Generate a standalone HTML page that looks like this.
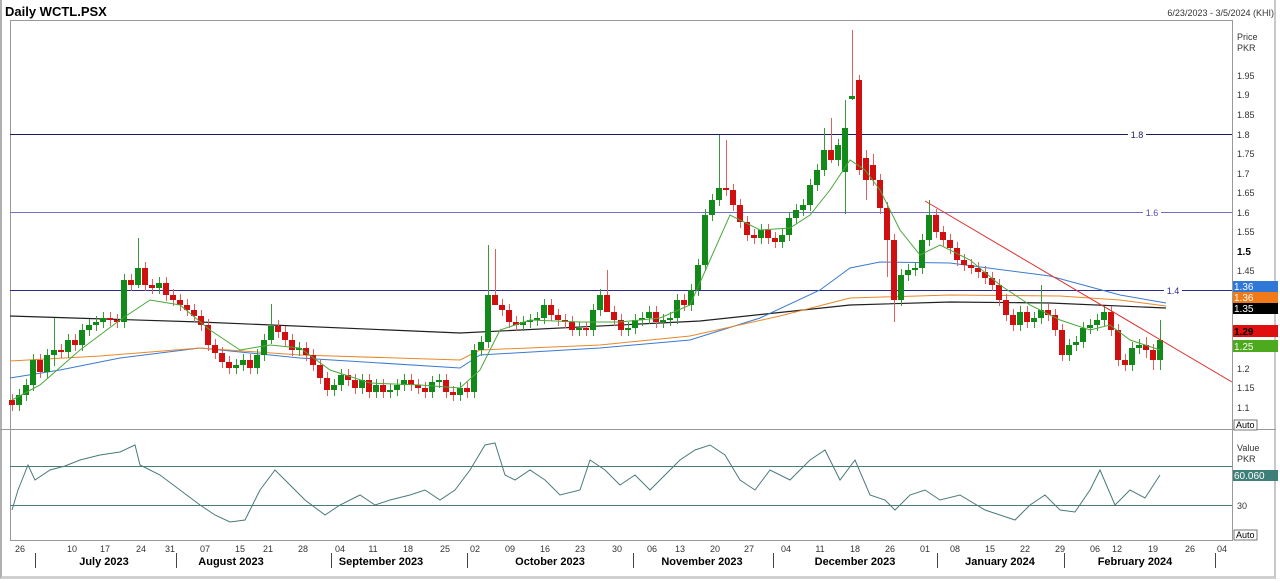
<!DOCTYPE html><html><head><meta charset="utf-8"><style>
body{margin:0;width:1280px;height:583px;overflow:hidden;background:#fff;font-family:"Liberation Sans",sans-serif}
#wrap{position:absolute;left:0;top:0;width:1276px;height:579px;border-right:2px solid #c8c8c8;border-bottom:3px solid #d0d0d0;border-left:2px solid #b0b0b0;box-sizing:border-box}
svg text{font-family:"Liberation Sans",sans-serif}
</style></head><body><div id="wrap"></div>
<svg width="1280" height="583" style="position:absolute;left:0;top:0">
<text x="5" y="16" font-size="13" font-weight="bold" fill="#000">Daily WCTL.PSX</text>
<text x="1274" y="16" font-size="9" fill="#333" text-anchor="end">6/23/2023 - 3/5/2024 (KHI)</text>
<rect x="10.5" y="20.5" width="1222" height="409" fill="none" stroke="#999"/>
<rect x="10.5" y="429.5" width="1222" height="111" fill="none" stroke="#999"/>
<line x1="0" y1="429.5" x2="1276" y2="429.5" stroke="#999"/>
<line x1="10" y1="134.5" x2="1232" y2="134.5" stroke="#1a1a60"/>
<line x1="10" y1="212.5" x2="1232" y2="212.5" stroke="#7070c8"/>
<line x1="10" y1="290.5" x2="1232" y2="290.5" stroke="#2a2a90"/>
<rect x="1128" y="129" width="18" height="10" fill="#fff"/><text x="1137" y="138" font-size="9" fill="#1a1a60" text-anchor="middle">1.8</text>
<rect x="1143" y="207" width="18" height="10" fill="#fff"/><text x="1152" y="216" font-size="9" fill="#5050b0" text-anchor="middle">1.6</text>
<rect x="1164" y="285" width="18" height="10" fill="#fff"/><text x="1173" y="294" font-size="9" fill="#2a2a90" text-anchor="middle">1.4</text>
<line x1="10" y1="466.5" x2="1232" y2="466.5" stroke="#4a7a7a"/>
<line x1="10" y1="505.5" x2="1232" y2="505.5" stroke="#4a7a7a"/>

<polyline fill="none" stroke="#202020" stroke-width="1.2" points="10,316 200,322 460,333 700,321 850,305 950,302 1050,303 1166,308"/>
<polyline fill="none" stroke="#3a7ad0" stroke-width="1" points="10,378 60,370 120,358 200,348 300,358 460,368 480,355 600,348 690,340 760,318 820,290 850,268 880,262 950,263 1050,276 1120,295 1166,303"/>
<polyline fill="none" stroke="#e8882a" stroke-width="1" points="10,361 100,356 200,348 300,355 460,360 480,350 600,345 690,336 780,316 850,298 950,295 1060,296 1120,300 1166,306"/>

<path stroke="#e06060" stroke-width="1" fill="none" d="M12.5 394v17M40.5 354v24M61.5 344v14M75.5 334v17M110.5 312v14M117.5 314v14M131.5 274v17M145.5 262v29M152.5 279v15M166.5 277v24M173.5 289v17M180.5 294v17M187.5 299v17M194.5 304v18M201.5 310v21M208.5 319v32M215.5 339v20M222.5 347v21M229.5 356v18M250.5 354v20M278.5 320v18M285.5 326v20M292.5 334v22M306.5 342v19M313.5 349v22M320.5 359v25M327.5 372v24M348.5 369v17M355.5 374v20M369.5 374v24M383.5 379v19M411.5 374v17M418.5 379v15M425.5 382v16M446.5 374v24M453.5 386v15M467.5 382v16M495.5 249v52M502.5 299v17M509.5 304v24M516.5 316v15M551.5 299v22M558.5 309v17M565.5 314v14M572.5 316v20M586.5 322v14M607.5 270v30M614.5 306v20M621.5 314v22M656.5 306v22M684.5 294v17M726.5 140v56M733.5 184v27M740.5 199v29M747.5 216v25M754.5 229v15M768.5 224v20M775.5 232v16M831.5 118v45M852.5 30v70M859.5 75v100M866.5 150v50M873.5 154v32M880.5 174v40M887.5 202v75M894.5 234v88M936.5 209v29M943.5 226v20M950.5 234v20M957.5 242v24M964.5 254v17M971.5 259v15M978.5 262v16M985.5 266v18M992.5 272v19M999.5 279v27M1006.5 294v27M1013.5 309v22M1027.5 306v22M1048.5 304v17M1055.5 309v27M1062.5 324v37M1111.5 306v30M1118.5 324v42M1125.5 354v17M1146.5 337v21M1153.5 344v26"/>
<path stroke="#3a9a3a" stroke-width="1" fill="none" d="M19.5 389v22M26.5 379v22M33.5 354v37M47.5 349v29M54.5 318v48M68.5 334v24M82.5 324v27M89.5 319v17M96.5 316v15M103.5 312v16M124.5 274v54M138.5 238v50M159.5 277v17M236.5 359v15M243.5 354v17M257.5 349v25M264.5 334v27M271.5 304v40M299.5 342v14M334.5 379v17M341.5 369v22M362.5 374v20M376.5 379v19M390.5 384v14M397.5 379v17M404.5 374v17M432.5 376v22M439.5 374v14M460.5 382v19M474.5 344v54M481.5 336v20M488.5 245v103M523.5 316v15M530.5 314v14M537.5 312v14M544.5 299v25M579.5 322v14M593.5 304v32M600.5 289v27M628.5 322v14M635.5 314v20M642.5 312v14M649.5 306v18M663.5 314v14M670.5 312v14M677.5 294v30M691.5 284v27M698.5 259v37M705.5 209v62M712.5 194v27M719.5 135v71M761.5 224v20M782.5 229v19M789.5 212v29M796.5 204v20M803.5 199v17M810.5 179v32M817.5 164v27M824.5 128v48M838.5 139v27M845.5 100v114M901.5 269v37M908.5 264v17M915.5 262v14M922.5 234v40M929.5 200v46M1020.5 306v25M1034.5 312v16M1041.5 285v39M1069.5 339v22M1076.5 336v15M1083.5 322v26M1090.5 319v15M1097.5 314v17M1104.5 306v20M1132.5 342v29M1139.5 339v15M1160.5 320v50"/>
<path fill="#d01010" d="M9 400h6v5h-6zM37 360h6v12h-6zM58 350h6v2h-6zM72 340h6v5h-6zM107 318h6v2h-6zM114 320h6v2h-6zM128 280h6v5h-6zM142 268h6v17h-6zM149 285h6v3h-6zM163 283h6v12h-6zM170 295h6v5h-6zM177 300h6v5h-6zM184 305h6v5h-6zM191 310h6v6h-6zM198 316h6v9h-6zM205 325h6v20h-6zM212 345h6v8h-6zM219 353h6v9h-6zM226 362h6v6h-6zM247 360h6v8h-6zM275 326h6v6h-6zM282 332h6v8h-6zM289 340h6v10h-6zM303 348h6v7h-6zM310 355h6v10h-6zM317 365h6v13h-6zM324 378h6v12h-6zM345 375h6v5h-6zM352 380h6v8h-6zM366 380h6v12h-6zM380 385h6v7h-6zM408 380h6v5h-6zM415 385h6v3h-6zM422 388h6v4h-6zM443 380h6v12h-6zM450 392h6v3h-6zM464 388h6v4h-6zM492 295h6v10h-6zM499 305h6v5h-6zM506 310h6v12h-6zM513 322h6v3h-6zM548 305h6v10h-6zM555 315h6v5h-6zM562 320h6v2h-6zM569 322h6v8h-6zM583 328h6v2h-6zM604 295h6v17h-6zM611 312h6v8h-6zM618 320h6v10h-6zM653 312h6v10h-6zM681 300h6v5h-6zM723 188h6v2h-6zM730 190h6v15h-6zM737 205h6v17h-6zM744 222h6v13h-6zM751 235h6v3h-6zM765 230h6v8h-6zM772 238h6v4h-6zM828 150h6v10h-6zM856 80h6v90h-6zM863 158h6v22h-6zM870 165h6v15h-6zM877 180h6v28h-6zM884 208h6v32h-6zM891 240h6v60h-6zM933 215h6v17h-6zM940 232h6v8h-6zM947 240h6v8h-6zM954 248h6v12h-6zM961 260h6v5h-6zM968 265h6v3h-6zM975 268h6v4h-6zM982 272h6v6h-6zM989 278h6v7h-6zM996 285h6v15h-6zM1003 300h6v15h-6zM1010 315h6v10h-6zM1024 312h6v10h-6zM1045 310h6v5h-6zM1052 315h6v15h-6zM1059 330h6v25h-6zM1108 312h6v18h-6zM1115 330h6v30h-6zM1122 360h6v5h-6zM1143 345h6v5h-6zM1150 350h6v10h-6z"/>
<path fill="#118a1a" d="M16 395h6v10h-6zM23 385h6v10h-6zM30 360h6v25h-6zM44 355h6v17h-6zM51 350h6v5h-6zM65 340h6v12h-6zM79 330h6v15h-6zM86 325h6v5h-6zM93 322h6v3h-6zM100 318h6v4h-6zM121 280h6v42h-6zM135 268h6v17h-6zM156 283h6v5h-6zM233 365h6v3h-6zM240 360h6v5h-6zM254 355h6v13h-6zM261 340h6v15h-6zM268 326h6v14h-6zM296 348h6v2h-6zM331 385h6v5h-6zM338 375h6v10h-6zM359 380h6v8h-6zM373 385h6v7h-6zM387 390h6v2h-6zM394 385h6v5h-6zM401 380h6v5h-6zM429 382h6v10h-6zM436 380h6v2h-6zM457 388h6v7h-6zM471 350h6v42h-6zM478 342h6v8h-6zM485 295h6v47h-6zM520 322h6v3h-6zM527 320h6v2h-6zM534 318h6v2h-6zM541 305h6v13h-6zM576 328h6v2h-6zM590 310h6v20h-6zM597 295h6v15h-6zM625 328h6v2h-6zM632 320h6v8h-6zM639 318h6v2h-6zM646 312h6v6h-6zM660 320h6v2h-6zM667 318h6v2h-6zM674 300h6v18h-6zM688 290h6v15h-6zM695 265h6v25h-6zM702 215h6v50h-6zM709 200h6v15h-6zM716 188h6v12h-6zM758 230h6v8h-6zM779 235h6v7h-6zM786 218h6v17h-6zM793 210h6v8h-6zM800 205h6v5h-6zM807 185h6v20h-6zM814 170h6v15h-6zM821 150h6v20h-6zM835 145h6v15h-6zM842 128h6v44h-6zM849 96h6v3h-6zM898 275h6v25h-6zM905 270h6v5h-6zM912 268h6v2h-6zM919 240h6v28h-6zM926 215h6v25h-6zM1017 312h6v13h-6zM1031 318h6v4h-6zM1038 310h6v8h-6zM1066 345h6v10h-6zM1073 342h6v3h-6zM1080 328h6v14h-6zM1087 325h6v3h-6zM1094 320h6v5h-6zM1101 312h6v8h-6zM1129 348h6v17h-6zM1136 345h6v3h-6zM1157 340h6v20h-6z"/>
<polyline fill="none" stroke="#4aa83a" stroke-width="1" points="12,400 40,385 80,350 120,320 150,300 180,305 210,330 240,350 270,345 300,348 330,370 370,383 420,385 460,388 480,370 500,330 530,320 580,322 620,322 660,318 690,305 710,260 730,215 760,230 790,228 810,215 830,190 850,160 865,170 880,190 900,230 920,255 940,245 970,260 1000,285 1030,305 1060,320 1090,330 1110,325 1130,340 1160,350"/>
<line x1="925" y1="201" x2="1232" y2="382" stroke="#e03030" stroke-width="1"/>
<polyline fill="none" stroke="#4a7a7a" stroke-width="1" points="12,510 18,490 22,480 28,465 35,480 50,470 65,466 80,460 100,455 120,452 135,445 140,465 160,475 180,490 200,505 215,515 230,522 245,520 260,490 275,470 290,485 305,500 325,515 340,505 360,495 375,505 390,500 410,495 425,490 440,500 455,490 470,470 485,445 495,443 505,475 515,480 530,470 545,480 560,495 580,490 590,460 605,470 620,485 635,475 650,490 665,475 680,460 695,450 710,445 725,455 740,480 755,490 770,470 790,480 810,460 825,450 840,480 855,460 870,495 885,500 895,510 910,495 925,490 940,500 960,495 985,510 1000,515 1015,520 1030,505 1045,495 1060,510 1075,512 1090,490 1100,470 1115,505 1130,490 1145,498 1160,475"/>

<g font-size="9" fill="#333">
<text x="1237" y="40">Price</text><text x="1237" y="51">PKR</text>
<text x="1237" y="79">1.95</text><text x="1237" y="98">1.9</text><text x="1237" y="118">1.85</text><text x="1237" y="138">1.8</text><text x="1237" y="157">1.75</text><text x="1237" y="177">1.7</text><text x="1237" y="196">1.65</text><text x="1237" y="216">1.6</text><text x="1237" y="235">1.55</text><text x="1237" y="255" font-weight="bold" fill="#000" font-size="10">1.5</text><text x="1237" y="274">1.45</text><text x="1237" y="333">1.3</text><text x="1237" y="372">1.2</text><text x="1237" y="391">1.15</text><text x="1237" y="411">1.1</text>
<text x="1237" y="451">Value</text><text x="1237" y="462">PKR</text><text x="1237" y="509">30</text>
</g>
<rect x="1234" y="420" width="23" height="10" fill="#fff" stroke="#555" stroke-width=".8"/><text x="1236" y="428" font-size="9">Auto</text>
<rect x="1234" y="530" width="23" height="10" fill="#fff" stroke="#555" stroke-width=".8"/><text x="1236" y="538" font-size="9">Auto</text>
<g font-size="10" fill="#fff">
<rect x="1233" y="281" width="45" height="11" fill="#2f78d8"/><text x="1234" y="290">1.36</text>
<rect x="1233" y="292" width="45" height="11" fill="#f07a18"/><text x="1234" y="301">1.36</text>
<rect x="1233" y="303" width="45" height="11" fill="#000"/><text x="1234" y="312">1.35</text>
<rect x="1233" y="325" width="45" height="12" fill="#e01010"/><text x="1234" y="335" fill="#000" font-weight="bold">1.29</text>
<rect x="1233" y="340" width="45" height="12" fill="#4caa1c"/><text x="1234" y="350">1.25</text>
<rect x="1233" y="470" width="45" height="11" fill="#3f7f7a"/><text x="1234" y="479">60.060</text>
</g>
<g font-size="9" fill="#333" text-anchor="middle">
<text x="20" y="552">26</text><text x="72" y="552">10</text><text x="105" y="552">17</text><text x="141" y="552">24</text><text x="170" y="552">31</text><text x="205" y="552">07</text><text x="240" y="552">15</text><text x="268" y="552">21</text><text x="303" y="552">28</text><text x="340" y="552">04</text><text x="373" y="552">11</text><text x="408" y="552">18</text><text x="445" y="552">25</text><text x="475" y="552">02</text><text x="510" y="552">09</text><text x="545" y="552">16</text><text x="580" y="552">23</text><text x="617" y="552">30</text><text x="652" y="552">06</text><text x="680" y="552">13</text><text x="715" y="552">20</text><text x="749" y="552">27</text><text x="786" y="552">04</text><text x="820" y="552">11</text><text x="855" y="552">18</text><text x="890" y="552">26</text><text x="925" y="552">01</text><text x="955" y="552">08</text><text x="990" y="552">15</text><text x="1025" y="552">22</text><text x="1060" y="552">29</text><text x="1095" y="552">06</text><text x="1117" y="552">12</text><text x="1153" y="552">19</text><text x="1190" y="552">26</text><text x="1222" y="552">04</text>
</g>
<g font-size="11" font-weight="bold" fill="#000" text-anchor="middle">
<text x="104" y="565">July 2023</text><text x="231" y="565">August 2023</text><text x="381" y="565">September 2023</text><text x="550" y="565">October 2023</text><text x="702" y="565">November 2023</text><text x="855" y="565">December 2023</text><text x="1000" y="565">January 2024</text><text x="1135" y="565">February 2024</text>
</g>
<g stroke="#444"><line x1="35.5" y1="553" x2="35.5" y2="568"/><line x1="176.5" y1="553" x2="176.5" y2="568"/><line x1="331.5" y1="553" x2="331.5" y2="568"/><line x1="467.5" y1="553" x2="467.5" y2="568"/><line x1="633.5" y1="553" x2="633.5" y2="568"/><line x1="773.5" y1="553" x2="773.5" y2="568"/><line x1="937.5" y1="553" x2="937.5" y2="568"/><line x1="1064.5" y1="553" x2="1064.5" y2="568"/><line x1="1215.5" y1="553" x2="1215.5" y2="568"/></g>
</svg>
</body></html>
